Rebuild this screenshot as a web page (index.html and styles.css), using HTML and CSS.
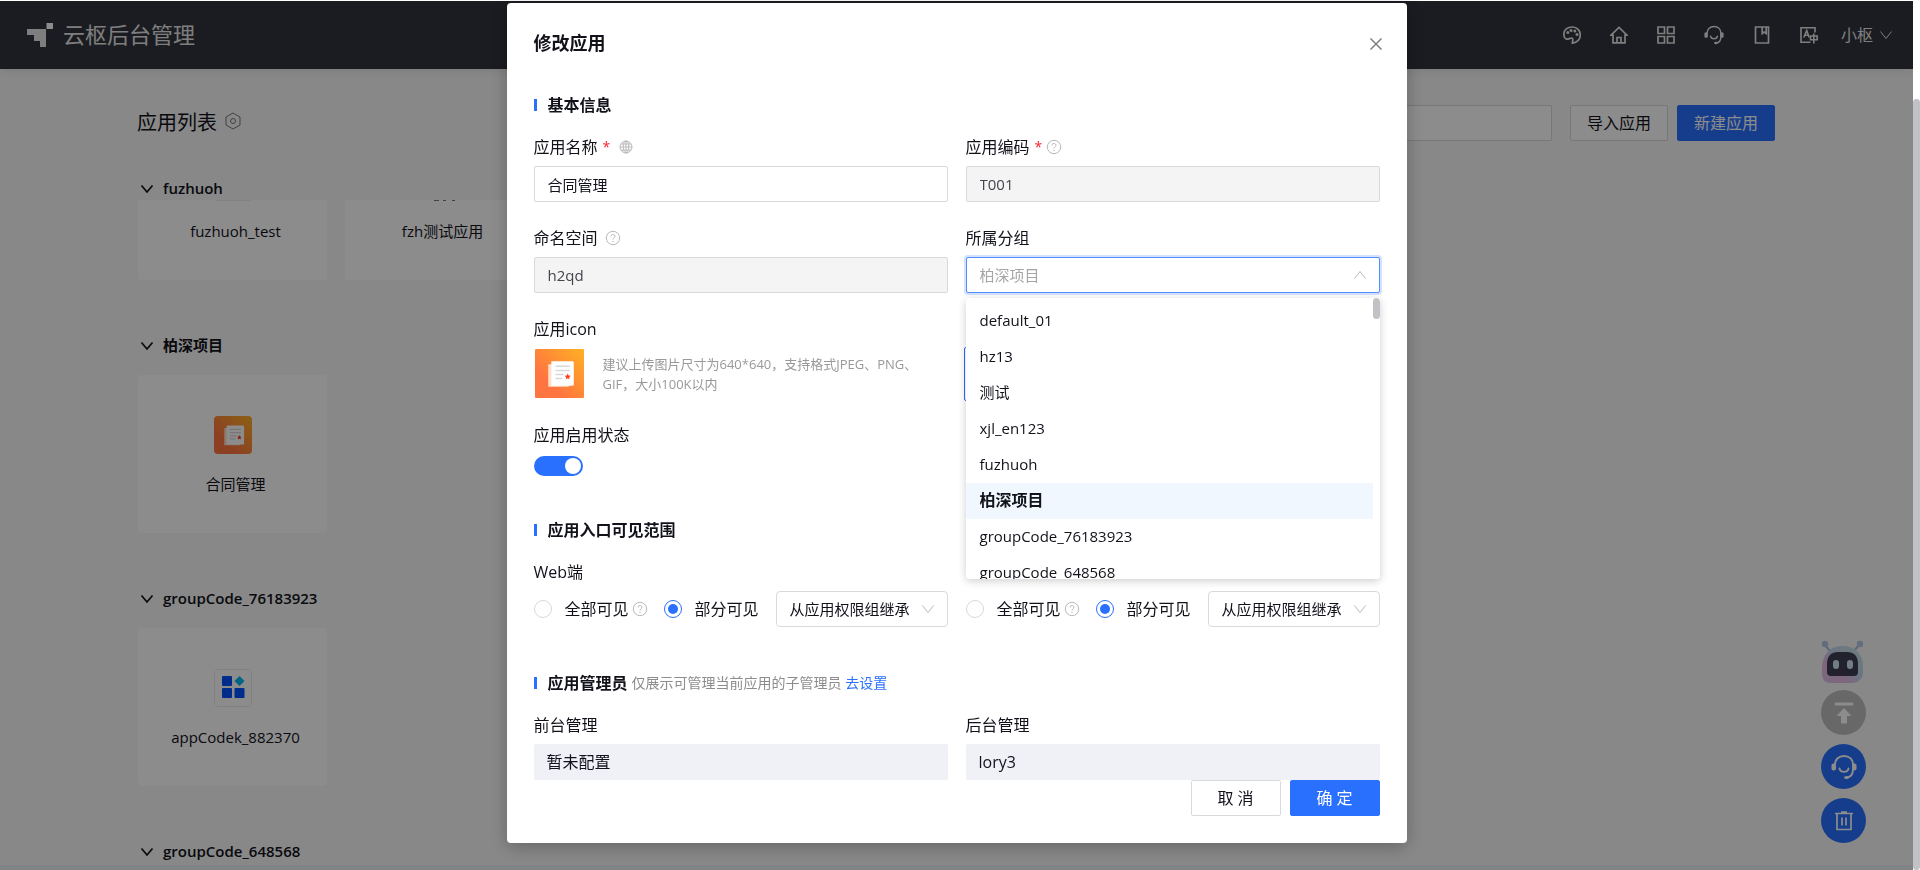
FILE: index.html
```html
<!DOCTYPE html>
<html lang="zh-CN">
<head>
<meta charset="utf-8">
<title>云枢后台管理</title>
<link rel="stylesheet" href="styles.css">
</head>
<body>
<svg class="defs" aria-hidden="true">
  <defs>
    <linearGradient id="orange" x1="0" y1="1" x2="1" y2="0">
      <stop offset="0.3" stop-color="#ff7540"/><stop offset="1" stop-color="#ffb124"/>
    </linearGradient>
    <linearGradient id="robot" x1="0" y1="1" x2="1" y2="0">
      <stop offset="0" stop-color="#d9c2ea"/><stop offset="0.3" stop-color="#e8b8e6"/><stop offset="0.55" stop-color="#c3d4ee"/><stop offset="1" stop-color="#c6e8e2"/>
    </linearGradient>
  </defs>
  <symbol id="contract" viewBox="0 0 48 48">
    <rect width="48" height="48" fill="url(#orange)"/>
    <path d="M13 15h20v22H13z" fill="#ffe0cc"/>
    <path d="M16 12h20.500a1.500 1.500 0 0 1 1.500 1.500V35a1 1 0 0 1-1 1H16z" fill="#fff"/>
    <path d="M20 17h14M20 21h14M20 25h8M20 29h7" stroke="#d8d8d8" stroke-width="1.500"/>
    <path d="M32 24l.9 1.900 2.100.2-1.500 1.500.4 2.100-1.900-1-1.900 1 .4-2.100-1.500-1.500 2.100-.2z" fill="#ff3d1f"/>
  </symbol>
  <symbol id="blocks" viewBox="0 0 38 38">
    <rect x="0.500" y="0.500" width="37" height="37" rx="1" fill="none" stroke="#ececec"/>
    <g fill="#0050ff"><rect x="8" y="7" width="10" height="10" rx="1"/><rect x="8" y="19" width="10" height="10" rx="1"/><rect x="20.500" y="19" width="10" height="10" rx="1"/></g>
    <path d="M25.500 7l5 5-5 5-5-5z" fill="#00b8f0"/>
  </symbol>
  <symbol id="down" viewBox="0 0 14 14"><path d="M1.500 3.500L7 10.500l5.500-7" fill="none" stroke="currentColor"/></symbol>
  <symbol id="fold" viewBox="0 0 14 14"><path d="M1.500 3.500L7 10l5.500-6.500" fill="none" stroke="currentColor" stroke-width="1.700"/></symbol>
  <symbol id="help" viewBox="0 0 16 16">
    <circle cx="8" cy="8" r="6.700" fill="none" stroke="currentColor"/>
    <path d="M6 6.500c0-2.700 4-2.500 4-.2 0 1.500-2 1.500-2 3.200" fill="none" stroke="currentColor"/><circle cx="8" cy="11.400" r=".7" fill="currentColor"/>
  </symbol>
  <symbol id="headset" viewBox="0 0 26 26">
    <path d="M4 11C4 5 8 2 13 2s9 3 9 9v4c0 4.500-2 8-6 8.500" fill="none" stroke="currentColor" stroke-width="1.900"/>
    <path d="M8.500 14.500c1 4.500 8 4.500 9 0" fill="none" stroke="currentColor" stroke-width="1.900" stroke-linecap="round"/>
    <rect x="0.500" y="9.500" width="4.500" height="7" rx="2" fill="currentColor"/><rect x="21" y="9.500" width="4.500" height="7" rx="2" fill="currentColor"/>
    <ellipse cx="15.500" cy="23.500" rx="2.500" ry="1.600" fill="currentColor"/>
  </symbol>
</svg>

<div class="screen">
  <header class="topbar">
    <svg class="logo" viewBox="0 0 26 24"><path d="M0 6h19v18h-6v-6H7v-6H0z" fill="#e6e6e6"/><path d="M19.500 0H26v6h-6.500z" fill="#fff"/></svg>
    <span class="brand">云枢后台管理</span>
    <nav class="tools">
      <button class="tool" aria-label="主题"><svg viewBox="0 0 18 18"><path d="M1 9.500C0 4 4.500 1 9.500 1 14 1 17.300 4.500 17.300 9c0 4.500-3.500 8-8 8.200 0-2.300 1.200-3.500.2-4.700C8 11 5 14 3.200 13 1.500 12.200 1 11 1 9.500z" fill="none" stroke="currentColor" stroke-width="1.700"/><g fill="currentColor"><circle cx="4.800" cy="6.600" r="1.500"/><circle cx="8" cy="4.500" r="1.500"/><circle cx="11.800" cy="5" r="1.500"/><circle cx="14" cy="8.500" r="1.500"/></g></svg></button>
      <button class="tool" aria-label="首页"><svg viewBox="0 0 18 18"><g fill="none" stroke="currentColor" stroke-width="1.700"><path d="M1 9.200L9 1.500l8 7.700h-2v7.600H3V9.200z"/><path d="M7 16.500v-5h4v5"/></g></svg></button>
      <button class="tool" aria-label="应用"><svg viewBox="0 0 18 18"><path d="M1 1h6.500v6.500H1zM10.500 1H17v6.500h-6.500zM1 10.500h6.500V17H1zM10.500 10.500H17V17h-6.500z" fill="none" stroke="currentColor" stroke-width="1.700"/></svg></button>
      <button class="tool wide" aria-label="客服"><svg viewBox="0 0 26 26"><use href="#headset"/></svg></button>
      <button class="tool" aria-label="文档"><svg viewBox="0 0 18 18"><path d="M2.500 1h13v16h-13zM9.200 1v6.500l2-1.500 2 1.500V1" fill="none" stroke="currentColor" stroke-width="1.700"/></svg></button>
      <button class="tool" aria-label="语言"><svg viewBox="0 0 18 18"><g fill="none" stroke="currentColor" stroke-width="1.600"><path d="M15 6.500V1.700H1v14.600h9.500"/><path d="M3.800 11.500L6.700 4.500l2.500 7M4.800 9.200h3.700"/><path d="M10.500 10h6.700v3.800h-6.700zM13.800 7.500v10"/></g></svg></button>
      <button class="user">小枢 <svg class="i14" viewBox="0 0 14 14"><use href="#down"/></svg></button>
    </nav>
  </header>

  <main class="page">
    <div class="page-head">
      <h1 class="page-title">应用列表</h1>
      <svg class="setting" viewBox="0 0 16 18"><path d="M8 1l7 4v8l-7 4-7-4V5z" fill="none" stroke="currentColor"/><circle cx="8" cy="9" r="2.500" fill="none" stroke="currentColor"/></svg>
      <input class="search" type="text" aria-label="搜索应用">
      <button class="btn">导入应用</button>
      <button class="btn primary">新建应用</button>
    </div>

    <section class="group">
      <h2 class="group-title"><svg class="i14" viewBox="0 0 14 14"><use href="#fold"/></svg>fuzhuoh</h2>
      <div class="cards scrolled">
        <article class="card"><svg class="app-icon" viewBox="0 0 38 38"><use href="#blocks"/></svg><span class="app-name">fuzhuoh_test</span></article>
        <article class="card"><svg class="app-icon" viewBox="0 0 38 38"><path d="M13 37.500h5M22 37.500h3M31 37.500h3" stroke="#777"/></svg><span class="app-name">fzh测试应用</span></article>
      </div>
    </section>
    <section class="group">
      <h2 class="group-title"><svg class="i14" viewBox="0 0 14 14"><use href="#fold"/></svg>柏深项目</h2>
      <div class="cards">
        <article class="card"><svg class="app-icon" viewBox="0 0 48 48"><use href="#contract"/></svg><span class="app-name">合同管理</span></article>
      </div>
    </section>
    <section class="group">
      <h2 class="group-title"><svg class="i14" viewBox="0 0 14 14"><use href="#fold"/></svg>groupCode_76183923</h2>
      <div class="cards">
        <article class="card"><svg class="app-icon" viewBox="0 0 38 38"><use href="#blocks"/></svg><span class="app-name">appCodek_882370</span></article>
      </div>
    </section>
    <section class="group">
      <h2 class="group-title"><svg class="i14" viewBox="0 0 14 14"><use href="#fold"/></svg>groupCode_648568</h2>
    </section>
  </main>
  <div class="page-foot"></div>

  <aside class="floats">
    <svg class="robot" viewBox="0 0 45 45">
      <path d="M4 5l5 6M38 5l-5 6" stroke="#a9bddd" stroke-width="2"/><circle cx="4" cy="4" r="3.200" fill="#b3c6e6"/><circle cx="39" cy="4" r="3.200" fill="#b3c6e6"/>
      <path d="M1 29C1 14 9 6 21.500 6S42 14 42 26v7a10 10 0 0 1-10 10H9a8 8 0 0 1-8-8z" fill="url(#robot)"/>
      <path d="M6 24c0-8 4-12 11-12h9c7 0 11 4 11 12v8a4 4 0 0 1-4 4H10a4 4 0 0 1-4-4z" fill="#3c3f52"/>
      <rect x="12" y="20" width="6" height="9" rx="3" fill="#cfe6ee"/><rect x="26" y="20" width="6" height="9" rx="3" fill="#cfe6ee"/>
    </svg>
    <button class="float gray" aria-label="回到顶部"><svg viewBox="0 0 26 26"><path d="M5 4h16" stroke="currentColor" stroke-width="3" stroke-linecap="round"/><path d="M13 8l7.500 8H16v6.500q0 1-1 1h-4q-1 0-1-1V16H5.500z" fill="currentColor"/></svg></button>
    <button class="float" aria-label="在线客服"><svg viewBox="0 0 26 26"><use href="#headset"/></svg></button>
    <button class="float" aria-label="回收站"><svg viewBox="0 0 26 26"><path d="M4 5.500h18M10 4h6M6 6v15.500h14V6M11 9.500v8M15 9.500v8" fill="none" stroke="currentColor" stroke-width="1.700"/></svg></button>
  </aside>
</div>

<div class="scrollbar"><div class="scroll-thumb"></div></div>

<div class="mask">
  <form class="modal" role="dialog" aria-labelledby="dlg-title">
    <div class="modal-head">
      <h2 class="modal-title" id="dlg-title">修改应用</h2>
      <button class="close" type="button" aria-label="关闭"><svg viewBox="0 0 14 14"><path d="M1.500 1.500l11 11M12.500 1.500l-11 11" stroke="currentColor" stroke-width="1.500"/></svg></button>
    </div>

    <section class="block first">
      <h3 class="block-title">基本信息</h3>
      <div class="grid">
        <div class="field">
          <div class="label-row"><label for="name">应用名称</label><span class="req">*</span><svg class="i16 globe" viewBox="0 0 16 16"><g fill="none" stroke="currentColor"><circle cx="8" cy="8" r="6"/><ellipse cx="8" cy="8" rx="2.800" ry="6"/><path d="M8 2v12M2 8h12M3 5h10M3 11h10"/></g></svg></div>
          <input class="input" id="name" type="text" value="合同管理">
        </div>
        <div class="field">
          <div class="label-row"><label for="code">应用编码</label><span class="req">*</span><svg class="i16" viewBox="0 0 16 16"><use href="#help"/></svg></div>
          <input class="input" id="code" type="text" value="T001" disabled>
        </div>
        <div class="field">
          <div class="label-row"><label for="ns">命名空间</label><svg class="i16 after" viewBox="0 0 16 16"><use href="#help"/></svg></div>
          <input class="input" id="ns" type="text" value="h2qd" disabled>
        </div>
        <div class="field">
          <div class="label-row"><label for="grp">所属分组</label></div>
          <div class="select open">
            <select class="input" id="grp"><option>柏深项目</option></select>
            <svg class="arrow up" viewBox="0 0 14 14"><use href="#down"/></svg>
            <div class="menu">
              <ul class="options" role="listbox" aria-label="所属分组">
                <li class="option" role="option">default_01</li>
                <li class="option" role="option">hz13</li>
                <li class="option" role="option">测试</li>
                <li class="option" role="option">xjl_en123</li>
                <li class="option" role="option">fuzhuoh</li>
                <li class="option current" role="option" aria-selected="true">柏深项目</li>
                <li class="option" role="option">groupCode_76183923</li>
                <li class="option" role="option">groupCode_648568</li>
              </ul>
              <div class="menu-thumb"></div>
            </div>
          </div>
        </div>
        <div class="field">
          <div class="label-row">应用icon</div>
          <div class="upload">
            <svg class="upload-icon" viewBox="0 0 48 48"><use href="#contract"/></svg>
            <p class="hint">建议上传图片尺寸为640*640，支持格式JPEG、PNG、<br>GIF，大小100K以内</p>
          </div>
        </div>
        <div class="field">
          <div class="label-row"></div>
          <div class="style-pick"></div>
        </div>
        <div class="field">
          <div class="label-row"><label for="on">应用启用状态</label></div>
          <input class="switch" id="on" type="checkbox" role="switch" checked>
        </div>
      </div>
    </section>

    <section class="block">
      <h3 class="block-title">应用入口可见范围</h3>
      <div class="grid">
        <div class="field">
          <div class="label-row">Web端</div>
          <div class="choices">
            <label class="choice"><input class="radio" type="radio" name="web">全部可见</label>
            <svg class="i16 tip" viewBox="0 0 16 16"><use href="#help"/></svg>
            <label class="choice"><input class="radio" type="radio" name="web" checked>部分可见</label>
            <div class="select"><select class="input" aria-label="Web端可见范围"><option>从应用权限组继承</option></select><svg class="arrow" viewBox="0 0 14 14"><use href="#down"/></svg></div>
          </div>
        </div>
        <div class="field">
          <div class="label-row"></div>
          <div class="choices">
            <label class="choice"><input class="radio" type="radio" name="mobile">全部可见</label>
            <svg class="i16 tip" viewBox="0 0 16 16"><use href="#help"/></svg>
            <label class="choice"><input class="radio" type="radio" name="mobile" checked>部分可见</label>
            <div class="select"><select class="input" aria-label="移动端可见范围"><option>从应用权限组继承</option></select><svg class="arrow" viewBox="0 0 14 14"><use href="#down"/></svg></div>
          </div>
        </div>
      </div>
    </section>

    <section class="block">
      <h3 class="block-title">应用管理员 <span class="note">仅展示可管理当前应用的子管理员 <a class="link" href="#">去设置</a></span></h3>
      <div class="grid">
        <div class="field"><div class="label-row">前台管理</div><div class="readonly">暂未配置</div></div>
        <div class="field"><div class="label-row">后台管理</div><div class="readonly">lory3</div></div>
      </div>
    </section>

    <div class="actions">
      <button class="btn" type="button">取 消</button>
      <button class="btn primary" type="button">确 定</button>
    </div>
  </form>
</div>
</body>
</html>
```

FILE: styles.css
```css
* { box-sizing: border-box; }
body {
  margin: 0;
  padding-top: 1px;
  height: 100vh;
  display: flex;
  overflow: hidden;
  background: #fff;
  color: #11121a;
  font: 16px/24px "Open Sans", "Noto Sans CJK SC", sans-serif;
}
button, input, select { font: inherit; color: inherit; }
h1, h2, h3, p, ul { margin: 0; padding: 0; font-weight: 400; }
svg { display: block; flex: none; }
.defs { position: absolute; width: 0; height: 0; }
.i14 { width: 14px; height: 14px; }
.i16 { width: 16px; height: 16px; color: #b8b8b8; }

.screen { flex: 1; display: flex; flex-direction: column; background: #f7f7f7; overflow: hidden; }
.scrollbar { width: 7px; padding-top: 98px; display: flex; }
.scroll-thumb { flex: 1; border-radius: 4px; background: #c1c2c5; }

.topbar {
  display: flex; align-items: center; flex: none;
  height: 68px; padding: 0 20px 0 27px;
  background: #31333c; color: #e6e6e6;
  box-shadow: 0 2px 8px rgba(0, 0, 0, .08);
}
.logo { width: 26px; height: 24px; }
.brand { margin-left: 10px; padding-bottom: 2px; font-size: 22px; }
.tools { margin-left: auto; display: flex; align-items: center; gap: 29px; }
.tool { width: 18px; height: 18px; padding: 0; border: 0; background: none; }
.tool svg { width: 18px; height: 18px; }
.tool.wide, .tool.wide svg { width: 20px; height: 20px; }
.user { display: flex; align-items: center; gap: 6px; padding: 0; margin-left: -6px; border: 0; background: none; }

.page { flex: 1; padding: 36px 138px 0 137px; overflow: hidden; }
.page-head { display: flex; align-items: center; margin-bottom: 36px; }
.page-title { font-size: 20px; }
.setting { width: 16px; height: 18px; margin: 0 auto 4px 8px; color: #777; }
.search { width: 360px; height: 36px; margin-right: 18px; border: 1px solid #d9d9d9; border-radius: 2px; background: #fff; }
.btn {
  height: 36px; min-width: 90px; padding: 0 16px;
  border: 1px solid #d9d9d9; border-radius: 2px; background: #fff;
}
.btn + .btn { margin-left: 9px; }
.btn.primary { border-color: #2970ff; background: #2970ff; color: #fff; }

.group { margin-bottom: 54px; }
.group-title {
  display: flex; align-items: center; gap: 9px;
  padding-left: 3px; margin-bottom: 18px;
  font-size: 15px; line-height: 23px; font-weight: 600;
}
.cards { display: flex; gap: 18px; }
.cards.scrolled { height: 80px; margin-top: -18px; align-items: flex-end; overflow: hidden; }
.card {
  flex: none; width: 189px; height: 158px; padding-top: 41px; margin-left: 1px;
  display: flex; flex-direction: column; align-items: center; gap: 18px;
  border-radius: 4px; background: #fff;
}
.card + .card { margin-left: 0; }
.app-icon { width: 38px; height: 38px; border-radius: 4px; }
.app-name { padding-left: 6px; font-size: 15px; }
.page-foot { flex: none; height: 5px; background: #eaf0f6; }

.floats {
  position: fixed; right: 54px; bottom: 27px;
  display: flex; flex-direction: column; gap: 9px;
}
.robot { width: 45px; height: 45px; margin-bottom: -4px; }
.float {
  width: 45px; height: 45px; padding: 0; border: 0; border-radius: 50%;
  display: grid; place-items: center; background: #2970ff; color: #fff;
}
.float.gray { background: #bdbec0; }
.float svg { width: 26px; height: 26px; }

.mask {
  position: fixed; inset: 1px 7px 0 0;
  display: flex; justify-content: center; align-items: flex-start;
  padding-top: 2px; background: rgba(0, 0, 0, .45);
}
.modal {
  width: 900px; padding: 27px; border-radius: 4px; background: #fff;
  box-shadow: 0 4px 18px rgba(0, 0, 0, .25);
}
.modal-head { display: flex; align-items: center; justify-content: space-between; }
.modal-title { font-size: 18px; line-height: 27px; font-weight: 700; }
.close { width: 14px; height: 14px; margin-right: -3px; padding: 0; border: 0; background: none; color: #808080; }

.block { margin-top: 42px; }
.block.first { margin-top: 36px; }
.block-title { display: flex; align-items: center; margin-bottom: 18px; font-size: 16px; font-weight: 600; }
.block-title::before { content: ""; width: 3px; height: 12px; margin-right: 11px; background: #2970ff; }
.note { margin-left: 4px; font-size: 14px; font-weight: 400; color: #8c8c8c; }
.link { color: #2970ff; text-decoration: none; }
.grid { display: grid; grid-template-columns: 1fr 1fr; gap: 24px 18px; }
.label-row { display: flex; align-items: center; height: 24px; margin-bottom: 7px; }
.req { margin: 0 4px 0 5px; color: #f5222d; font-size: 14px; }
.globe { margin-left: 4px; }
.after { margin-left: 7px; }

.input {
  display: block; width: 100%; height: 36px; padding: 0 13px;
  border: 1px solid #d9d9d9; border-radius: 2px; background: #fff;
  font-size: 15px; appearance: none;
}
.input:disabled { background: #f4f4f4; color: #44454d; opacity: 1; }
.select { position: relative; }
.select .arrow { position: absolute; right: 13px; top: 11px; width: 14px; height: 14px; color: #b8b8b8; }
.arrow.up { transform: rotate(180deg); }
.select.open .input { border-color: #528fff; color: #a6a6a6; box-shadow: 0 0 0 2px rgba(41, 112, 255, .2); }
.menu {
  position: absolute; z-index: 2; top: 41px; left: 0; right: 0; height: 281px;
  display: flex; overflow: hidden; border-radius: 4px; background: #fff;
}
.select.open::after {
  content: ""; position: absolute; z-index: 1; top: 41px; left: 0; right: 0; height: 281px;
  border-radius: 4px; box-shadow: 0 2px 8px rgba(0, 0, 0, .2);
}
.options { flex: 1; padding-top: 5px; list-style: none; }
.option { height: 36px; padding: 0 14px; font-size: 15px; line-height: 34px; }
.option.current { background: #f0f7ff; font-size: 16px; font-weight: 600; }
.menu-thumb { width: 7px; height: 21px; border-radius: 4px; background: #c1c2c5; }

.upload { display: flex; align-items: center; gap: 18px; }
.upload-icon { width: 51px; height: 51px; padding: 1px; border-radius: 2px; }
.hint { font-size: 13px; line-height: 20px; color: #999; white-space: nowrap; }
.style-pick { width: 54px; height: 54px; margin: -1px 0 -2px -2px; border: 1px solid #2970ff; border-radius: 2px; }

.switch {
  appearance: none; display: flex; justify-content: flex-end; align-items: center;
  width: 49px; height: 20px; margin: 9px 0 0; padding: 0 2px; border-radius: 10px; background: #2970ff;
}
.switch::before { content: ""; width: 16px; height: 16px; border-radius: 50%; background: #fff; }

.choices { display: flex; align-items: center; padding-bottom: 2px; }
.choice { display: flex; align-items: center; gap: 13px; }
.radio {
  appearance: none; flex: none; width: 18px; height: 18px; margin: 0;
  display: grid; place-items: center;
  border: 1px solid #d9d9d9; border-radius: 50%; background: #fff;
}
.radio:checked { border-color: #2970ff; }
.radio:checked::before { content: ""; width: 10px; height: 10px; border-radius: 50%; background: #2970ff; }
.tip { margin: 0 16px 0 3px; }
.choices .select { flex: 1; margin-left: 17px; }
.choices .input { border-radius: 4px; padding-right: 30px; }

.readonly { height: 36px; padding: 0 13px; border-radius: 2px; background: #f0f1f6; line-height: 36px; }
.actions { display: flex; justify-content: flex-end; }
```
